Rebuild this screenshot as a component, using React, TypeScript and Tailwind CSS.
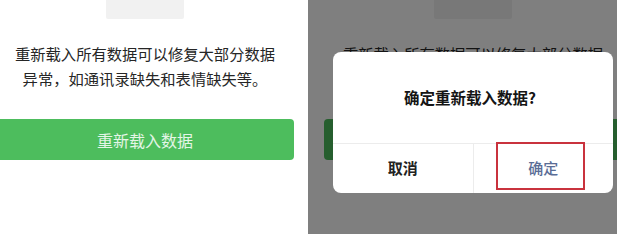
import React from "react";

const font = {
  fontFamily: '"Noto Sans CJK SC", "Noto Sans", sans-serif',
};

function Screen() {
  return (
    <div className="flex w-[290px] flex-col items-center">
      <div className="h-[19px] w-[78px] rounded-b-[2px] bg-[#f1f1f1]" />
      <div className="mt-[22px] text-center text-[15.3px] leading-[25px] text-[#262626]">
        <p className="whitespace-nowrap">重新载入所有数据可以修复大部分数据</p>
        <p className="whitespace-nowrap">异常，如通讯录缺失和表情缺失等。</p>
      </div>
      <button
        type="button"
        className="mt-[28px] flex h-[41px] w-[298px] shrink-0 items-center justify-center rounded-[4px] bg-[#4dbd5d] text-[16px] text-white/85"
      >
        重新载入数据
      </button>
    </div>
  );
}

function ConfirmDialog() {
  return (
    <div className="absolute left-[25px] top-[52px] w-[280px] overflow-hidden rounded-[8px] bg-white">
      <div className="flex h-[91px] items-center justify-center pr-[6px] text-[15.5px] font-semibold text-[#151515]">
        确定重新载入数据?
      </div>
      <div className="flex h-[50px] border-t border-[#ececec]">
        <div className="flex flex-1 items-center justify-center text-[15px] font-semibold text-[#222]">
          取消
        </div>
        <div className="w-px bg-[#ececec]" />
        <div className="flex flex-1 items-center justify-center text-[15px] font-medium text-[#5a6d96]">
          确定
        </div>
      </div>
      <div className="absolute left-[163px] top-[90px] h-[48px] w-[89px] border-2 border-[#c9323d]" />
    </div>
  );
}

export default function App() {
  return (
    <div className="flex h-[234px] w-[617px] overflow-hidden bg-white" style={font}>
      <div className="h-full w-[308px] shrink-0 overflow-hidden bg-white">
        <Screen />
      </div>
      <div className="relative h-full flex-1 overflow-hidden bg-white">
        <div className="ml-[20px]">
          <Screen />
        </div>
        <div className="absolute inset-0 bg-black/50" />
        <ConfirmDialog />
      </div>
    </div>
  );
}
